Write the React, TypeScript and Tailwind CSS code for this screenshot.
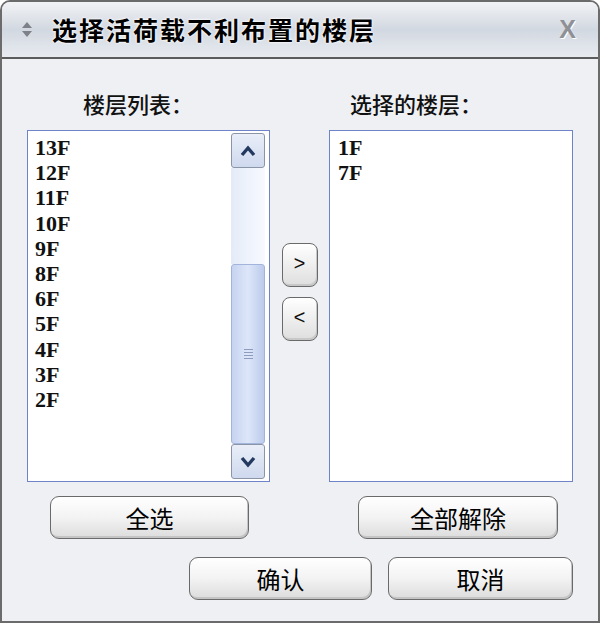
import React from 'react';

const cjk = "font-['Noto_Sans_CJK_SC',sans-serif]";
const floors = ['13F', '12F', '11F', '10F', '9F', '8F', '6F', '5F', '4F', '3F', '2F'];
const chosen = ['1F', '7F'];

const Chevron = ({ up }: { up: boolean }) => (
  <svg width="16" height="12" viewBox="0 0 16 12">
    <path
      d={up ? 'M2 10 L8 3 L14 10' : 'M2 2 L8 9 L14 2'}
      fill="none"
      stroke="#23395f"
      strokeWidth="3.4"
      strokeLinejoin="miter"
    />
  </svg>
);

const ScrollButton = ({ up }: { up: boolean }) => (
  <div className="h-[35px] flex items-center justify-center rounded-[3px] border border-[#8c95a8] bg-gradient-to-b from-[#e9eef8] to-[#cfd9ee]">
    <Chevron up={up} />
  </div>
);

const PushButton = ({ label, className }: { label: string; className: string }) => (
  <button
    className={`h-[43px] rounded-[9px] border-[1.5px] border-[#6a6a6a] bg-gradient-to-b from-white via-[#f3f3f3] to-[#dcdcdc] shadow-[inset_-1px_-2px_0_#c4c4c4] text-[24px] leading-none text-black ${cjk} ${className}`}
  >
    {label}
  </button>
);

const ArrowButton = ({ label }: { label: string }) => (
  <button className="w-[36px] h-[44px] rounded-[8px] border-[1.5px] border-[#6a6a6a] bg-gradient-to-b from-white to-[#dedede] shadow-[inset_-1px_-2px_0_#c8c8c8] text-[20px] leading-none text-[#111] font-['Liberation_Mono',monospace]">
    {label}
  </button>
);

export default function App() {
  return (
    <div className="w-[600px] h-[623px] flex flex-col bg-[#eef0f4] border-2 border-[#6b6b6b] rounded-t-[10px] overflow-hidden">
      {/* title bar */}
      <div className="h-[57px] shrink-0 flex items-center border-b-2 border-[#5c5c5c] bg-gradient-to-b from-[#f2f3f5] via-[#d2d8e1] to-[#e8ebf0]">
        <svg className="ml-[19px]" width="12" height="17" viewBox="0 0 12 17">
          <path d="M6 1 L11 7 L1 7 Z" fill="#7e8187" />
          <path d="M6 16 L11 10 L1 10 Z" fill="#7e8187" />
        </svg>
        <div
          className={`ml-[19px] text-[25px] leading-none font-bold tracking-[2px] text-black [text-shadow:0_0_2px_#fff,0_0_3px_#fff] ${cjk}`}
        >
          选择活荷载不利布置的楼层
        </div>
        <div className="ml-auto mr-[22px] text-[25px] leading-none font-bold text-[#8e9096] [text-shadow:1px_1px_0_#fff] font-['Liberation_Sans',sans-serif]">
          X
        </div>
      </div>

      {/* body */}
      <div className="flex-1 flex flex-col px-[25px]">
        <div className="h-[71px] flex pt-[33px]">
          <div className="w-[243px]">
            <div className={`ml-[56px] text-[22px] leading-[23px] font-medium text-[#111] ${cjk}`}>楼层列表：</div>
          </div>
          <div className="flex-1" />
          <div className="w-[244px]">
            <div className={`ml-[21px] text-[22px] leading-[23px] font-medium text-[#111] ${cjk}`}>选择的楼层：</div>
          </div>
        </div>

        <div className="h-[352px] flex">
          <div className="w-[243px] flex bg-white border border-[#6f84c8]">
            <div className="flex-1 pl-[7px] pt-[4px] text-[22px] leading-[25.2px] font-bold text-[#111] font-['Liberation_Serif',serif]">
              {floors.map((f) => (
                <div key={f}>{f}</div>
              ))}
            </div>
            <div className="w-[34px] mr-[4px] my-[2px] flex flex-col">
              <ScrollButton up />
              <div className="h-[96px] bg-gradient-to-r from-[#e4ebf8] via-[#eef3fc] to-[#f7f9fe]" />
              <div className="flex-1 flex items-center justify-center rounded-[3px] border border-[#a3b4dc] bg-gradient-to-r from-[#c6d3f0] via-[#dde6f9] to-[#bccbeb]">
                <div className="flex flex-col gap-[2px]">
                  <div className="w-[9px] h-px bg-[#8d9bbd]" />
                  <div className="w-[9px] h-px bg-[#8d9bbd]" />
                  <div className="w-[9px] h-px bg-[#8d9bbd]" />
                  <div className="w-[9px] h-px bg-[#8d9bbd]" />
                </div>
              </div>
              <ScrollButton up={false} />
            </div>
          </div>

          <div className="flex-1 flex flex-col items-center pt-[113px] gap-[10px]">
            <ArrowButton label=">" />
            <ArrowButton label="<" />
          </div>

          <div className="w-[244px] bg-white border border-[#6f84c8] pl-[8px] pt-[4px] text-[22px] leading-[25.2px] font-bold text-[#111] font-['Liberation_Serif',serif]">
            {chosen.map((f) => (
              <div key={f}>{f}</div>
            ))}
          </div>
        </div>

        <div className="flex mt-[14px]">
          <PushButton label="全选" className="ml-[23px] w-[199px]" />
          <PushButton label="全部解除" className="ml-auto mr-[15px] w-[200px]" />
        </div>

        <div className="flex justify-end gap-[16px] mt-[18px]">
          <PushButton label="确认" className="w-[183px]" />
          <PushButton label="取消" className="w-[185px]" />
        </div>
      </div>
    </div>
  );
}
